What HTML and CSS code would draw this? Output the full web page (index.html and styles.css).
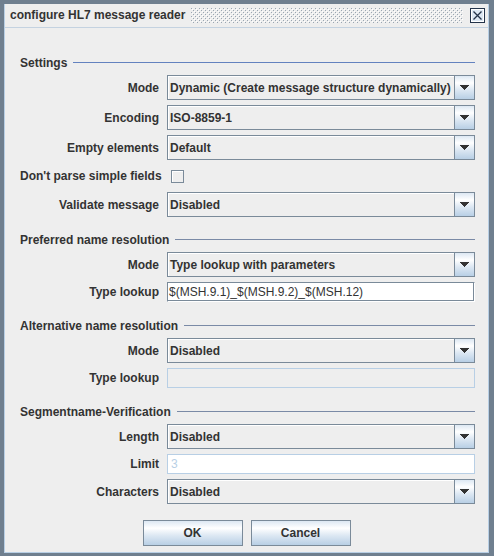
FILE: index.html
```html
<!DOCTYPE html>
<html>
<head>
<meta charset="utf-8">
<link rel="stylesheet" href="styles.css">
</head>
<body>
<div class="window">
  <div class="frame">
    <div class="titlebar">
      <span class="title">configure HL7 message reader</span>
      <span class="bumps">
        <svg width="100%" height="15" shape-rendering="crispEdges">
          <defs>
            <pattern id="bp" width="4" height="4" patternUnits="userSpaceOnUse">
              <rect x="0" y="0" width="1" height="1" fill="#9aa6b2"/>
              <rect x="2" y="2" width="1" height="1" fill="#9aa6b2"/>
              <rect x="1" y="1" width="1" height="1" fill="#ffffff"/>
              <rect x="3" y="3" width="1" height="1" fill="#ffffff"/>
            </pattern>
          </defs>
          <rect width="100%" height="15" fill="url(#bp)"/>
        </svg>
      </span>
      <span class="close">
        <svg width="15" height="15" viewBox="0 0 15 15" shape-rendering="crispEdges">
          <rect x="0.5" y="0.5" width="14" height="14" fill="#dde8f3" stroke="#24344a"/>
          <rect x="1.5" y="1.5" width="12" height="12" fill="none" stroke="#ffffff"/>
          <path d="M3.5 3.5 L11.5 11.5 M11.5 3.5 L3.5 11.5" stroke="#24344a" stroke-width="1.3" shape-rendering="geometricPrecision"/>
        </svg>
      </span>
    </div>

    <div class="content">
      <div class="section first">
        <div class="heading"><span class="htext">Settings</span><span class="hline blue"></span></div>
        <div class="grid">
          <span class="label">Mode</span>
          <div class="combo"><span class="value">Dynamic (Create message structure dynamically)</span><span class="arrow"><svg width="9" height="5" shape-rendering="crispEdges"><rect x="0" y="0" width="9" height="1" fill="#333"/><rect x="1" y="1" width="7" height="1" fill="#333"/><rect x="2" y="2" width="5" height="1" fill="#333"/><rect x="3" y="3" width="3" height="1" fill="#333"/><rect x="4" y="4" width="1" height="1" fill="#333"/></svg></span></div>

          <span class="label">Encoding</span>
          <div class="combo"><span class="value">ISO-8859-1</span><span class="arrow"><svg width="9" height="5" shape-rendering="crispEdges"><rect x="0" y="0" width="9" height="1" fill="#333"/><rect x="1" y="1" width="7" height="1" fill="#333"/><rect x="2" y="2" width="5" height="1" fill="#333"/><rect x="3" y="3" width="3" height="1" fill="#333"/><rect x="4" y="4" width="1" height="1" fill="#333"/></svg></span></div>

          <span class="label">Empty elements</span>
          <div class="combo"><span class="value">Default</span><span class="arrow"><svg width="9" height="5" shape-rendering="crispEdges"><rect x="0" y="0" width="9" height="1" fill="#333"/><rect x="1" y="1" width="7" height="1" fill="#333"/><rect x="2" y="2" width="5" height="1" fill="#333"/><rect x="3" y="3" width="3" height="1" fill="#333"/><rect x="4" y="4" width="1" height="1" fill="#333"/></svg></span></div>

          <span class="label">Don't parse simple fields</span>
          <div class="checkrow"><span class="checkbox"></span></div>

          <span class="label">Validate message</span>
          <div class="combo"><span class="value">Disabled</span><span class="arrow"><svg width="9" height="5" shape-rendering="crispEdges"><rect x="0" y="0" width="9" height="1" fill="#333"/><rect x="1" y="1" width="7" height="1" fill="#333"/><rect x="2" y="2" width="5" height="1" fill="#333"/><rect x="3" y="3" width="3" height="1" fill="#333"/><rect x="4" y="4" width="1" height="1" fill="#333"/></svg></span></div>
        </div>
      </div>

      <div class="section s2">
        <div class="heading"><span class="htext">Preferred name resolution</span><span class="hline"></span></div>
        <div class="grid">
          <span class="label">Mode</span>
          <div class="combo"><span class="value">Type lookup with parameters</span><span class="arrow"><svg width="9" height="5" shape-rendering="crispEdges"><rect x="0" y="0" width="9" height="1" fill="#333"/><rect x="1" y="1" width="7" height="1" fill="#333"/><rect x="2" y="2" width="5" height="1" fill="#333"/><rect x="3" y="3" width="3" height="1" fill="#333"/><rect x="4" y="4" width="1" height="1" fill="#333"/></svg></span></div>

          <span class="label">Type lookup</span>
          <div class="field">$(MSH.9.1)_$(MSH.9.2)_$(MSH.12)</div>
        </div>
      </div>

      <div class="section s3">
        <div class="heading"><span class="htext">Alternative name resolution</span><span class="hline"></span></div>
        <div class="grid">
          <span class="label">Mode</span>
          <div class="combo"><span class="value">Disabled</span><span class="arrow"><svg width="9" height="5" shape-rendering="crispEdges"><rect x="0" y="0" width="9" height="1" fill="#333"/><rect x="1" y="1" width="7" height="1" fill="#333"/><rect x="2" y="2" width="5" height="1" fill="#333"/><rect x="3" y="3" width="3" height="1" fill="#333"/><rect x="4" y="4" width="1" height="1" fill="#333"/></svg></span></div>

          <span class="label">Type lookup</span>
          <div class="field disabled"></div>
        </div>
      </div>

      <div class="section s4">
        <div class="heading"><span class="htext">Segmentname-Verification</span><span class="hline"></span></div>
        <div class="grid">
          <span class="label">Length</span>
          <div class="combo"><span class="value">Disabled</span><span class="arrow"><svg width="9" height="5" shape-rendering="crispEdges"><rect x="0" y="0" width="9" height="1" fill="#333"/><rect x="1" y="1" width="7" height="1" fill="#333"/><rect x="2" y="2" width="5" height="1" fill="#333"/><rect x="3" y="3" width="3" height="1" fill="#333"/><rect x="4" y="4" width="1" height="1" fill="#333"/></svg></span></div>

          <span class="label">Limit</span>
          <div class="field readonly">3</div>

          <span class="label">Characters</span>
          <div class="combo"><span class="value">Disabled</span><span class="arrow"><svg width="9" height="5" shape-rendering="crispEdges"><rect x="0" y="0" width="9" height="1" fill="#333"/><rect x="1" y="1" width="7" height="1" fill="#333"/><rect x="2" y="2" width="5" height="1" fill="#333"/><rect x="3" y="3" width="3" height="1" fill="#333"/><rect x="4" y="4" width="1" height="1" fill="#333"/></svg></span></div>
        </div>
      </div>

      <div class="buttons">
        <span class="button">OK</span>
        <span class="button">Cancel</span>
      </div>
    </div>
  </div>
</div>
</body>
</html>
```

FILE: styles.css
```css
html, body {
  margin: 0;
  padding: 0;
  background: #eeeeee;
}

.window {
  width: 494px;
  height: 556px;
  box-sizing: border-box;
  border-style: solid;
  border-color: #6f7f8f;
  border-width: 4px 5px 3px 4px;
  background: #eeeeee;
  font-family: "Liberation Sans", Arial, sans-serif;
  font-size: 12px;
  color: #333333;
}

.frame {
  height: 100%;
  box-sizing: border-box;
  border-left: 1px solid #b8cfe5;
  border-right: 1px solid #b8cfe5;
  border-bottom: 1px solid #b8cfe5;
  display: flex;
  flex-direction: column;
}

.titlebar {
  height: 23px;
  border-bottom: 1px solid #c4d2e0;
  display: flex;
  align-items: center;
  padding: 0 3px 0 5px;
}

.title {
  font-weight: bold;
  font-size: 12px;
  line-height: 23px;
  color: #333333;
  white-space: nowrap;
}

.bumps {
  flex: 1;
  height: 15px;
  margin: 0 7px 0 6px;
  display: block;
}

.bumps svg {
  display: block;
}

.close {
  width: 15px;
  height: 15px;
  display: block;
}

.close svg {
  display: block;
}

.content {
  padding: 27px 13px 0 15px;
}

.section.s2 { margin-top: 15px; }
.section.s3 { margin-top: 16px; }
.section.s4 { margin-top: 16px; }

.heading {
  height: 16px;
  display: flex;
  align-items: flex-start;
  margin-bottom: 4px;
}

.htext {
  font-weight: bold;
  line-height: 16px;
  white-space: nowrap;
}

.hline {
  flex: 1;
  height: 1px;
  margin-top: 7px;
  margin-left: 6px;
  background: #7a8aa6;
}

.hline.blue {
  background: #6382bf;
}

.grid {
  display: grid;
  grid-template-columns: 139px 308px;
  column-gap: 8px;
  row-gap: 5px;
}

.label {
  font-weight: bold;
  text-align: right;
  align-self: center;
  white-space: nowrap;
  line-height: 15px;
  padding-top: 1px;
}

.combo {
  height: 25px;
  box-sizing: border-box;
  border: 1px solid #7a8a99;
  display: flex;
  background: #eeeeee;
}

.combo .value {
  flex: 1;
  font-weight: bold;
  line-height: 22px;
  padding-top: 1px;
  padding-left: 2px;
  white-space: nowrap;
  overflow: hidden;
  box-shadow: inset 1px 1px 0 #ffffff;
}

.combo .arrow {
  width: 19px;
  border-left: 1px solid #7a8a99;
  background: linear-gradient(#dde8f3 0%, #ffffff 30%, #dde8f3 60%, #b8cfe5 100%);
  display: flex;
  align-items: center;
  justify-content: center;
}

.combo .arrow svg {
  display: block;
}

.checkrow {
  height: 22px;
  display: flex;
  align-items: center;
  padding-left: 4px;
}

.checkbox {
  width: 13px;
  height: 13px;
  box-sizing: border-box;
  border: 1px solid #7a8a99;
  background: #eeeeee;
  box-shadow: inset 1px 1px 0 #ffffff;
}

.field {
  height: 20px;
  box-sizing: border-box;
  border: 1px solid #7a8a99;
  border-right-color: #ffffff;
  border-bottom-color: #ffffff;
  box-shadow: inset -1px -1px 0 #7a8a99;
  background: #ffffff;
  line-height: 18px;
  padding-left: 1px;
  white-space: nowrap;
}

.field.disabled {
  border: 1px solid #b8cfe5;
  box-shadow: none;
  background: #eeeeee;
}

.field.readonly {
  border: 1px solid #b8cfe5;
  box-shadow: none;
  background: #ffffff;
  color: #b8cfe5;
  padding-left: 3px;
}

.buttons {
  margin-top: 16px;
  display: flex;
  justify-content: center;
  gap: 8px;
  padding-right: 2px;
}

.button {
  width: 100px;
  height: 26px;
  box-sizing: border-box;
  border: 1px solid #7a8a99;
  background: linear-gradient(#dde8f3 0%, #ffffff 30%, #dde8f3 60%, #b8cfe5 100%);
  font-weight: bold;
  text-align: center;
  line-height: 24px;
}
```
